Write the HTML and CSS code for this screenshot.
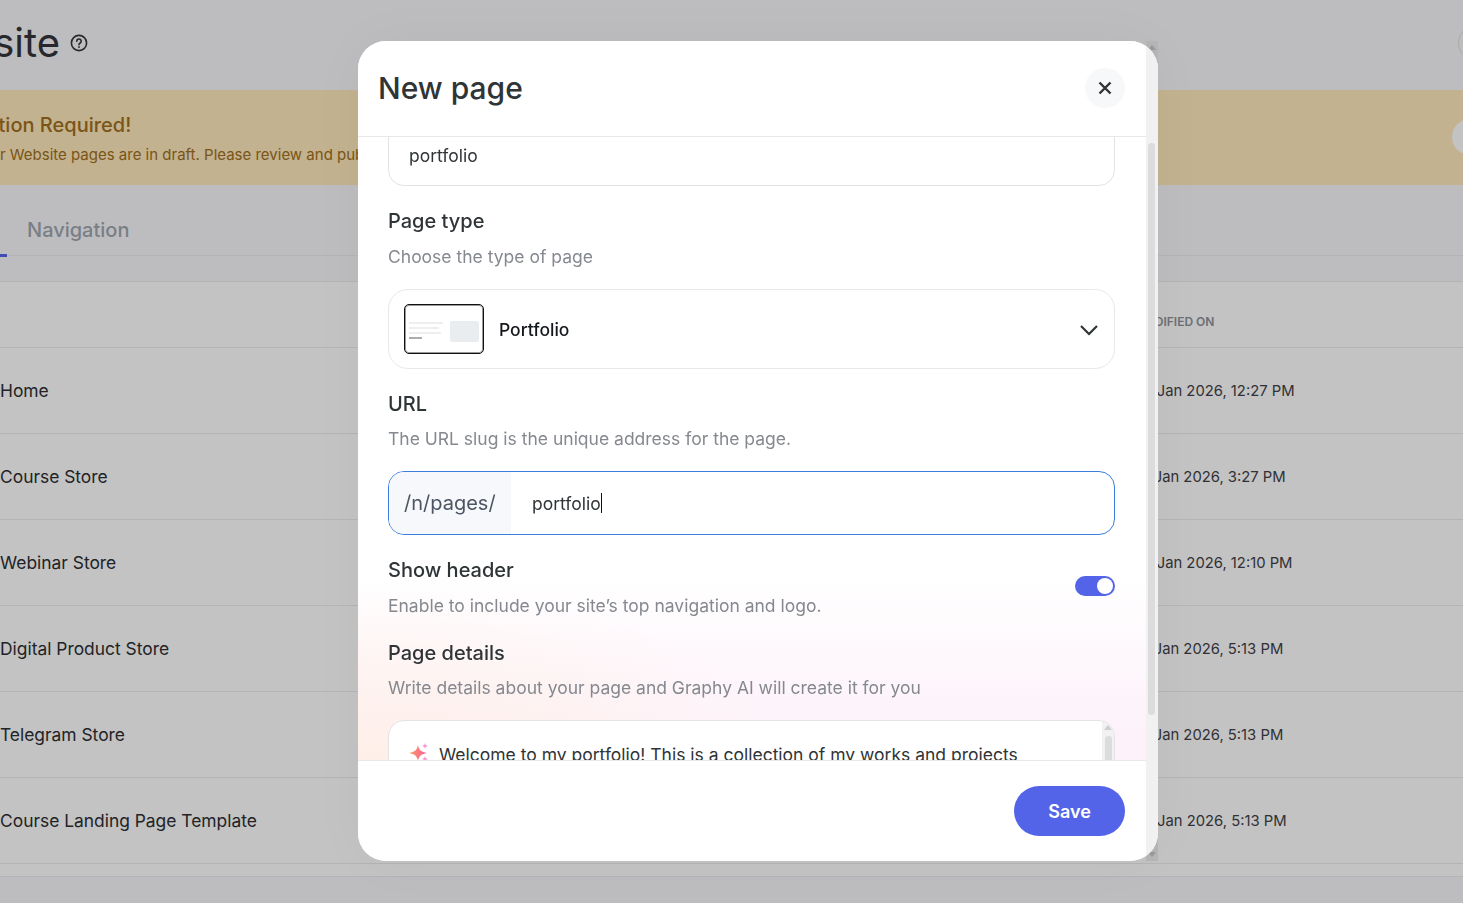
FILE: index.html
```html
<!DOCTYPE html>
<html lang="en">
<head>
    <meta charset="UTF-8">
    <meta name="viewport" content="width=device-width, initial-scale=1.0">
    <title>Website - New page</title>
    <link rel="stylesheet" href="styles.css">
</head>

<body>
    <div class="page">
        <header class="page-header">
            <h1>Website</h1>
            <svg class="help-icon" width="18" height="18" viewBox="0 0 18 18" fill="none" stroke="#34353a" stroke-width="1.6">
                <circle cx="9" cy="9" r="7.6"/>
                <path d="M6.8 7.2a2.2 2.2 0 1 1 3.4 1.8c-.8.5-1.2.9-1.2 1.7" stroke-linecap="round"/>
                <circle cx="9" cy="13" r=".5" fill="#34353a" stroke-width="1"/>
            </svg>
            <span class="header-round"></span>
        </header>

        <div class="banner">
            <div class="banner-text">
                <h2>Action Required!</h2>
                <p>Your Website pages are in draft. Please review and publish them.</p>
            </div>
            <span class="banner-round"></span>
        </div>

        <nav class="tabs">
            <span class="tab active">Pages</span>
            <span class="tab">Navigation</span>
        </nav>

        <div class="table">
            <div class="row head">
                <span></span>
                <span class="date">MODIFIED ON</span>
            </div>
            <div class="row"><span>Home</span><span class="date">22 Jan 2026, 12:27 PM</span></div>
            <div class="row"><span>Course Store</span><span class="date">21 Jan 2026, 3:27 PM</span></div>
            <div class="row"><span>Webinar Store</span><span class="date">22 Jan 2026, 12:10 PM</span></div>
            <div class="row"><span>Digital Product Store</span><span class="date">21 Jan 2026, 5:13 PM</span></div>
            <div class="row"><span>Telegram Store</span><span class="date">21 Jan 2026, 5:13 PM</span></div>
            <div class="row"><span>Course Landing Page Template</span><span class="date">20 Jan 2026, 5:13 PM</span></div>
            <div class="row spacer"></div>
        </div>
    </div>

    <div class="backdrop"></div>

    <div class="scroll-back">
        <span class="arrow-up"></span>
        <span class="arrow-down"></span>
    </div>

    <div class="modal">
        <div class="modal-main">
            <div class="modal-header">
                <h2>New page</h2>
                <button class="close-btn" aria-label="Close">
                    <svg width="14" height="14" viewBox="0 0 14 14" fill="none" stroke="#2f3437" stroke-width="2.4">
                        <path d="M1.5 1.5l11 11M12.5 1.5l-11 11"/>
                    </svg>
                </button>
            </div>

            <div class="modal-body">
                <div class="field-input title-input">portfolio</div>

                <h3 class="label">Page type</h3>
                <p class="hint">Choose the type of page</p>
                <div class="select-box">
                    <div class="thumb">
                        <span class="thumb-lines">
                            <i></i><i class="l2"></i><i class="l3"></i><i class="l4"></i>
                        </span>
                        <span class="thumb-img"></span>
                    </div>
                    <span class="select-text">Portfolio</span>
                    <svg class="chevron" width="20" height="12" viewBox="0 0 20 12" fill="none" stroke="#2f3437" stroke-width="2.2">
                        <path d="M2 2l8 8 8-8"/>
                    </svg>
                </div>

                <h3 class="label">URL</h3>
                <p class="hint hint-tight">The URL slug is the unique address for the page.</p>
                <div class="url-input">
                    <span class="url-prefix">/n/pages/</span>
                    <span class="url-value">portfolio<span class="caret"></span></span>
                </div>

                <div class="toggle-row">
                    <div>
                        <h3 class="label">Show header</h3>
                        <p class="hint">Enable to include your site’s top navigation and logo.</p>
                    </div>
                    <span class="toggle"><span class="knob"></span></span>
                </div>

                <h3 class="label label-details">Page details</h3>
                <p class="hint hint-tight">Write details about your page and Graphy AI will create it for you</p>
                <div class="details-box">
                    <svg class="sparkle" width="20" height="22" viewBox="0 0 20 22">
                        <defs>
                            <linearGradient id="spark" x1="0" y1="0" x2="1" y2="0">
                                <stop offset="0" stop-color="#fb9a62"/>
                                <stop offset="1" stop-color="#f95d9b"/>
                            </linearGradient>
                        </defs>
                        <path d="M9 2c1 5 3 7 9 8-6 1-8 3-9 8-1-5-3-7-9-8 6-1 8-3 9-8z" fill="url(#spark)"/>
                        <path d="M16 0c.3 1.700 1 2.400 3 3-2 .6-2.700 1.300-3 3-.3-1.700-1-2.400-3-3 2-.6 2.700-1.300 3-3z" fill="#f59ad6"/>
                        <path d="M16 13c.3 1.700 1 2.400 3 3-2 .6-2.700 1.300-3 3-.3-1.700-1-2.400-3-3 2-.6 2.700-1.300 3-3z" fill="#f59ad6"/>
                    </svg>
                    <p>Welcome to my portfolio! This is a collection of my works and projects</p>
                    <div class="details-bar">
                        <span class="arrow-up small"></span>
                        <span class="details-thumb"></span>
                    </div>
                </div>
            </div>

            <div class="modal-footer">
                <button class="save-btn">Save</button>
            </div>
        </div>

        <div class="modal-bar"><span class="bar-thumb"></span></div>
    </div>
</body>
</html>
```

FILE: styles.css
```css
* {
    box-sizing: border-box;
}

html,
body {
    margin: 0;
    padding: 0;
    height: 100%;
    overflow: hidden;
}

body {
    font-family: "Inter", "Liberation Sans", sans-serif;
    background-color: #f7f8fb;
    color: #2d2e33;
}

h1,
h2,
h3,
p {
    margin: 0;
}

.page {
    width: 1463px;
}

.page-header {
    height: 90px;
    display: flex;
    align-items: center;
    position: relative;
}

.page-header h1 {
    font-size: 40px;
    font-weight: 400;
    margin-left: -92px;
    margin-top: -5px;
    color: #33343a;
}

.help-icon {
    margin-left: 10px;
    margin-top: -5px;
}

.header-round {
    position: absolute;
    left: 1458px;
    top: 25px;
    width: 36px;
    height: 36px;
    border: 1px solid #dcdcdc;
    border-radius: 50%;
}

.banner {
    height: 95px;
    background-color: #ffe9bb;
    display: flex;
    align-items: center;
    position: relative;
    color: #a16f1d;
}

.banner-text {
    margin-left: -27px;
    margin-top: 2px;
}

.banner h2 {
    font-size: 20px;
    font-weight: 500;
    line-height: 28px;
}

.banner p {
    font-size: 15px;
    line-height: 24px;
    margin-top: 4px;
    white-space: nowrap;
}

.banner-round {
    position: absolute;
    left: 1452px;
    top: 29px;
    width: 36px;
    height: 36px;
    border-radius: 50%;
    background-color: #fff;
}

.tabs {
    height: 71px;
    display: flex;
    align-items: stretch;
    margin-left: -92px;
    border-bottom: 1px solid #ebecef;
}

.tab {
    font-size: 20px;
    font-weight: 500;
    color: #9fa6af;
    padding: 20px 20px 0;
    display: flex;
    align-items: center;
}

.tab.active {
    color: #5364e8;
    border-bottom: 3px solid #5364e8;
    margin-bottom: -2px;
}

.table {
    margin-top: 25px;
    background-color: #fff;
    border-top: 1px solid #ebecef;
}

.row {
    height: 86px;
    display: flex;
    align-items: center;
    justify-content: space-between;
    border-bottom: 1px solid #ebecef;
    font-size: 17.400px;
    color: #2d2e33;
}

.row.head {
    height: 66px;
    padding-top: 14px;
}

.row.spacer {
    height: 13px;
}

.date {
    width: 328.500px;
    font-size: 14.800px;
    color: #3f4147;
}

.row.head .date {
    font-size: 12px;
    font-weight: 600;
    color: #8d9199;
}

.backdrop {
    position: fixed;
    top: 0;
    left: 0;
    width: 100%;
    height: 100%;
    background-color: rgba(0, 0, 0, 0.235);
}

.scroll-back {
    position: absolute;
    left: 1146px;
    top: 41px;
    width: 12px;
    height: 820px;
    background-color: #b6b6b7;
}

.arrow-up,
.arrow-down {
    position: absolute;
    left: 2px;
    width: 0;
    height: 0;
    border-left: 4px solid transparent;
    border-right: 4px solid transparent;
}

.arrow-up {
    top: 4px;
    border-bottom: 5px solid #9a9a9a;
}

.arrow-down {
    bottom: 4px;
    border-top: 5px solid #9a9a9a;
}

.modal {
    position: absolute;
    left: 358px;
    top: 41px;
    width: 800px;
    height: 820px;
    display: flex;
    background-color: #fff;
    border-radius: 28px;
    overflow: hidden;
    box-shadow: 0 0 60px rgba(0, 0, 0, 0.03);
}

.modal-main {
    flex: 1;
    min-width: 0;
    display: flex;
    flex-direction: column;
}

.modal-bar {
    width: 12px;
    background-color: #f1f1f1;
    padding: 102px 3px 0 2px;
}

.bar-thumb {
    display: block;
    height: 572px;
    background-color: #dcdcdc;
    border-radius: 4px;
}

.modal-header {
    height: 96px;
    flex-shrink: 0;
    display: flex;
    align-items: center;
    justify-content: space-between;
    padding: 0 21px 2px 20px;
    border-bottom: 1px solid #e8e8e8;
    position: relative;
    z-index: 1;
    background-color: #fff;
}

.modal-header h2 {
    font-size: 30px;
    font-weight: 500;
    color: #2f3437;
}

.close-btn {
    width: 40px;
    height: 40px;
    border: none;
    border-radius: 50%;
    background-color: #f7f8f9;
    display: flex;
    align-items: center;
    justify-content: center;
    padding: 0;
}

.modal-body {
    flex: 1;
    min-height: 0;
    overflow: hidden;
    padding: 0 31px 0 30px;
    background:
        radial-gradient(ellipse 55% 28% at 0% 100%, rgba(255, 238, 224, 0.7), rgba(255, 238, 224, 0)),
        linear-gradient(180deg, #fff 70%, #fdf2fa 95%);
}

.field-input {
    height: 64px;
    border: 1px solid #e3e3e3;
    border-radius: 16px;
    font-size: 17.500px;
    color: #2f3437;
    display: flex;
    align-items: center;
    padding: 3px 20px 0;
    background-color: #fff;
}

.title-input {
    margin-top: -15px;
}

.label {
    font-size: 20px;
    font-weight: 500;
    line-height: 28px;
    color: #2f3437;
    margin-top: 21px;
}

.hint {
    font-size: 17.500px;
    line-height: 26px;
    color: #85898f;
    margin-top: 9px;
}

.hint-tight {
    margin-top: 8px;
}

.select-box {
    height: 80px;
    margin-top: 19px;
    border: 1px solid #e8e8e8;
    border-radius: 20px;
    display: flex;
    align-items: center;
    padding: 0 15px;
    background-color: #fff;
}

.thumb {
    width: 80px;
    height: 50px;
    border: 1px solid #111;
    box-shadow: inset 0 0 0 1px rgba(0, 0, 0, 0.4);
    border-radius: 5px;
    display: flex;
    align-items: center;
    padding: 0 4px;
    gap: 7px;
}

.thumb-lines {
    width: 34px;
    display: flex;
    flex-direction: column;
    gap: 3px;
    margin-top: 3px;
}

.thumb-lines i {
    display: block;
    height: 2px;
    background-color: #eceef0;
}

.thumb-lines .l2 {
    width: 30px;
}

.thumb-lines .l3 {
    width: 32px;
}

.thumb-lines .l4 {
    width: 13px;
    background-color: #a9adb1;
}

.thumb-img {
    width: 29px;
    height: 21px;
    background-color: #eaedf0;
    border-radius: 2px;
    margin-top: 4px;
}

.select-text {
    font-size: 17.500px;
    font-weight: 500;
    color: #14171c;
    margin-left: 15px;
    flex: 1;
}

.chevron {
    margin-top: 2px;
}

.url-input {
    height: 64px;
    margin-top: 19px;
    border: 1px solid #3a7ee0;
    border-radius: 16px;
    display: flex;
    align-items: stretch;
    overflow: hidden;
    background-color: #fff;
}

.url-prefix {
    width: 122px;
    background-color: #f6f8fb;
    font-size: 20px;
    color: #4c5561;
    display: flex;
    align-items: center;
    padding-left: 15px;
}

.url-value {
    font-size: 17.500px;
    color: #2f3437;
    display: flex;
    align-items: center;
    padding-left: 21px;
}

.caret {
    width: 1px;
    height: 20px;
    background-color: #111;
}

.toggle-row {
    display: flex;
    align-items: center;
    justify-content: space-between;
}

.toggle {
    width: 40px;
    height: 20px;
    border-radius: 10px;
    background-color: #5364e8;
    display: flex;
    align-items: center;
    justify-content: flex-end;
    padding-right: 2px;
    margin-top: 18px;
}

.knob {
    width: 16px;
    height: 16px;
    border-radius: 50%;
    background-color: #fff;
}

.label-details {
    margin-top: 20px;
}

.details-box {
    margin-top: 19px;
    height: 120px;
    border: 1px solid #e3e3e3;
    border-radius: 16px;
    background-color: #fff;
    display: flex;
    align-items: flex-start;
    padding: 22px 0 0 20px;
    position: relative;
    overflow: hidden;
}

.details-box p {
    font-size: 17.500px;
    line-height: 22px;
    color: #2f3437;
    margin: 1px 0 0 10px;
    white-space: nowrap;
}

.sparkle {
    flex-shrink: 0;
}

.details-bar {
    position: absolute;
    top: 0;
    right: 0;
    width: 12px;
    height: 100%;
    background-color: #f1f1f1;
    padding: 15px 2px 0 3px;
}

.details-bar .arrow-up {
    top: 4px;
    border-bottom-color: #cfcfcf;
}

.details-thumb {
    display: block;
    height: 90px;
    background-color: #dcdcdc;
    border-radius: 4px;
}

.modal-footer {
    height: 101px;
    flex-shrink: 0;
    border-top: 1px solid #e8e8e8;
    background-color: #fff;
    display: flex;
    align-items: center;
    justify-content: flex-end;
    padding-right: 21px;
}

.save-btn {
    width: 111px;
    height: 50px;
    border: none;
    border-radius: 25px;
    background-color: #5364e8;
    color: #fff;
    font-family: inherit;
    font-size: 18px;
    font-weight: 600;
}
```
